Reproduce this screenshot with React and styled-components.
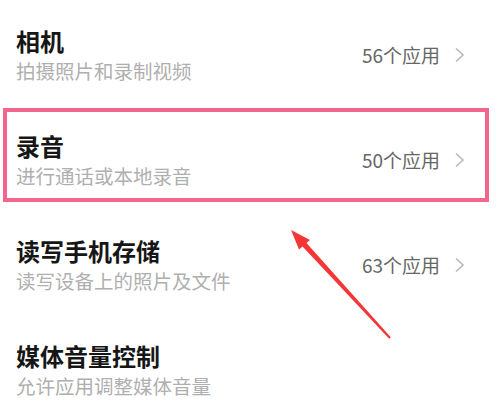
import React from "react";
import styled, { createGlobalStyle } from "styled-components";

const GlobalStyle = createGlobalStyle`
    html, body {
        margin: 0;
        padding: 0;
        background: #ffffff;
    }
    body {
        font-family: "Noto Sans CJK SC", "Noto Sans", sans-serif;
    }
`;

const Page = styled.div`
    position: relative;
    width: 500px;
    height: 403px;
    overflow: hidden;
    background: #fff;
    padding-top: 2px;
    box-sizing: border-box;
`;

const List = styled.div`
    display: flex;
    flex-direction: column;
`;

const Row = styled.div`
    position: relative;
    height: 105px;
    display: flex;
    align-items: center;
    justify-content: space-between;
    padding: 0 34px 0 16px;

    &::after {
        content: "";
        display: ${(p) => (p.$highlighted ? "block" : "none")};
        position: absolute;
        top: 1px;
        bottom: 10px;
        left: 3px;
        right: 11px;
        border: 4px solid #f2668e;
        pointer-events: none;
    }
`;

const Texts = styled.div`
    display: flex;
    flex-direction: column;
`;

const Title = styled.div`
    font-size: 24px;
    line-height: 32px;
    font-weight: 700;
    color: #161616;
`;

const Sub = styled.div`
    font-size: 19.5px;
    line-height: 26px;
    margin-top: 1px;
    color: #afafaf;
`;

const Count = styled.div`
    display: flex;
    align-items: center;
    gap: 14px;
    font-size: 19px;
    color: #666;
`;

const Chevron = () => (
    <svg width="12" height="16" viewBox="0 0 12 16">
        <path d="M2 1.5 L9 8 L2 14.5" fill="none" stroke="#b8b8b8" strokeWidth="1.6" />
    </svg>
);

const Arrow = styled.svg`
    position: absolute;
    left: 0;
    top: 0;
    pointer-events: none;
`;

const items = [
    { title: "相机", sub: "拍摄照片和录制视频", count: "56个应用" },
    { title: "录音", sub: "进行通话或本地录音", count: "50个应用", highlighted: true },
    { title: "读写手机存储", sub: "读写设备上的照片及文件", count: "63个应用" },
    { title: "媒体音量控制", sub: "允许应用调整媒体音量" },
];

export default function App() {
    return (
        <Page>
            <GlobalStyle />
            <List>
                {items.map((it) => (
                    <Row key={it.title} $highlighted={it.highlighted}>
                        <Texts>
                            <Title>{it.title}</Title>
                            <Sub>{it.sub}</Sub>
                        </Texts>
                        {it.count && (
                            <Count>
                                {it.count}
                                <Chevron />
                            </Count>
                        )}
                    </Row>
                ))}
            </List>
            <Arrow width="500" height="403" viewBox="0 0 500 403">
                <polygon
                    points="291,230 310,240 306.5,243 390.8,337.2 389.2,338.8 302.5,246.6 299,249.5"
                    fill="#f43636"
                />
            </Arrow>
        </Page>
    );
}
